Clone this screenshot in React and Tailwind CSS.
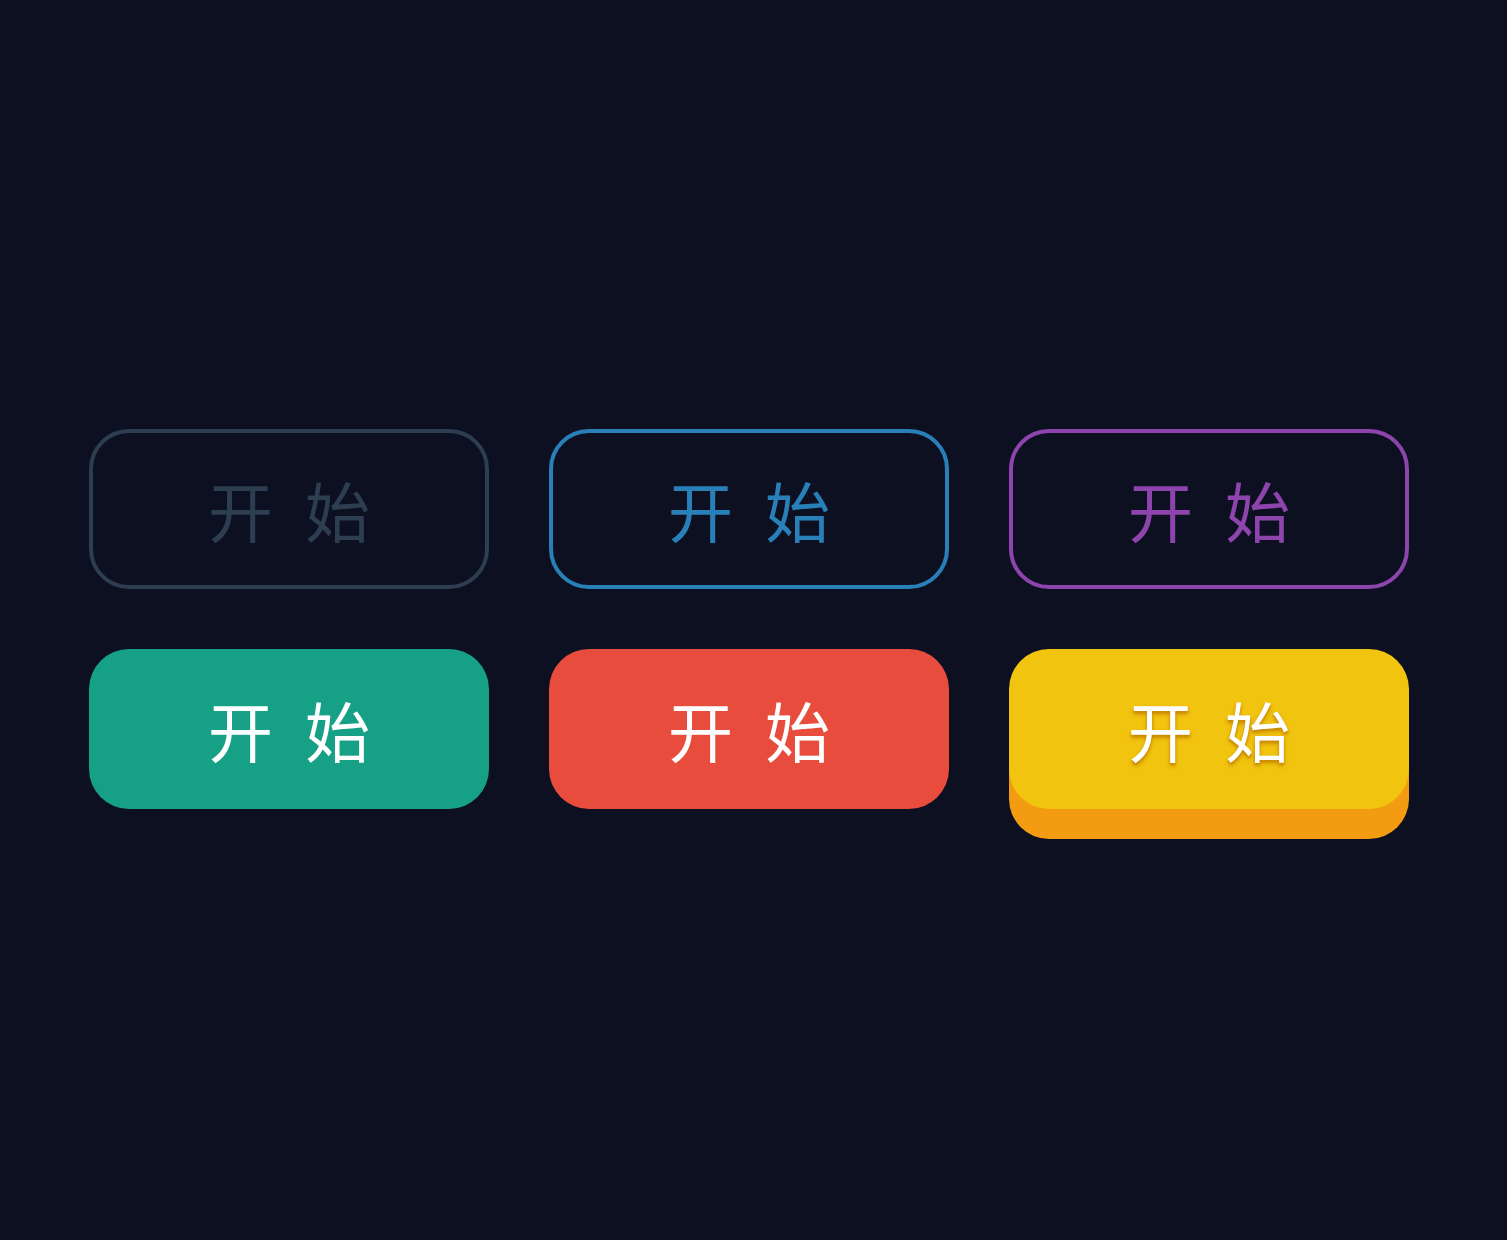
import React from 'react';

const FONT = { fontFamily: '"Noto Sans CJK SC", "Noto Sans", sans-serif' };

const buttons = [
  { key: 'dark', cls: 'border-4 border-[#2c3e50] text-[#2c3e50] bg-transparent' },
  { key: 'blue', cls: 'border-4 border-[#2980b9] text-[#2980b9] bg-transparent' },
  { key: 'purple', cls: 'border-4 border-[#8e44ad] text-[#8e44ad] bg-transparent' },
  { key: 'green', cls: 'bg-[#16a085] text-white' },
  { key: 'red', cls: 'bg-[#e74c3c] text-white' },
  { key: 'yellow', cls: 'bg-[#f1c40f] text-white shadow-[0_30px_0_#f39c12] [text-shadow:0_3px_4px_#c98a00,0_2px_2px_#d39200]' },
];

const StartButton = ({ cls }) => (
  <button
    className={`w-[400px] h-[160px] rounded-[40px] flex items-center justify-center gap-8 text-[65px] font-normal leading-none ${cls}`}
    style={FONT}
  >
    <span>开</span>
    <span>始</span>
  </button>
);

export default function App() {
  return (
    <div className="min-h-[1240px] w-full bg-[#0d1021] flex justify-start pl-[89px] pt-[429px]">
      <div className="grid grid-cols-3 gap-x-[60px] gap-y-[60px] h-fit">
        {buttons.map((b) => (
          <StartButton key={b.key} cls={b.cls} />
        ))}
      </div>
    </div>
  );
}
